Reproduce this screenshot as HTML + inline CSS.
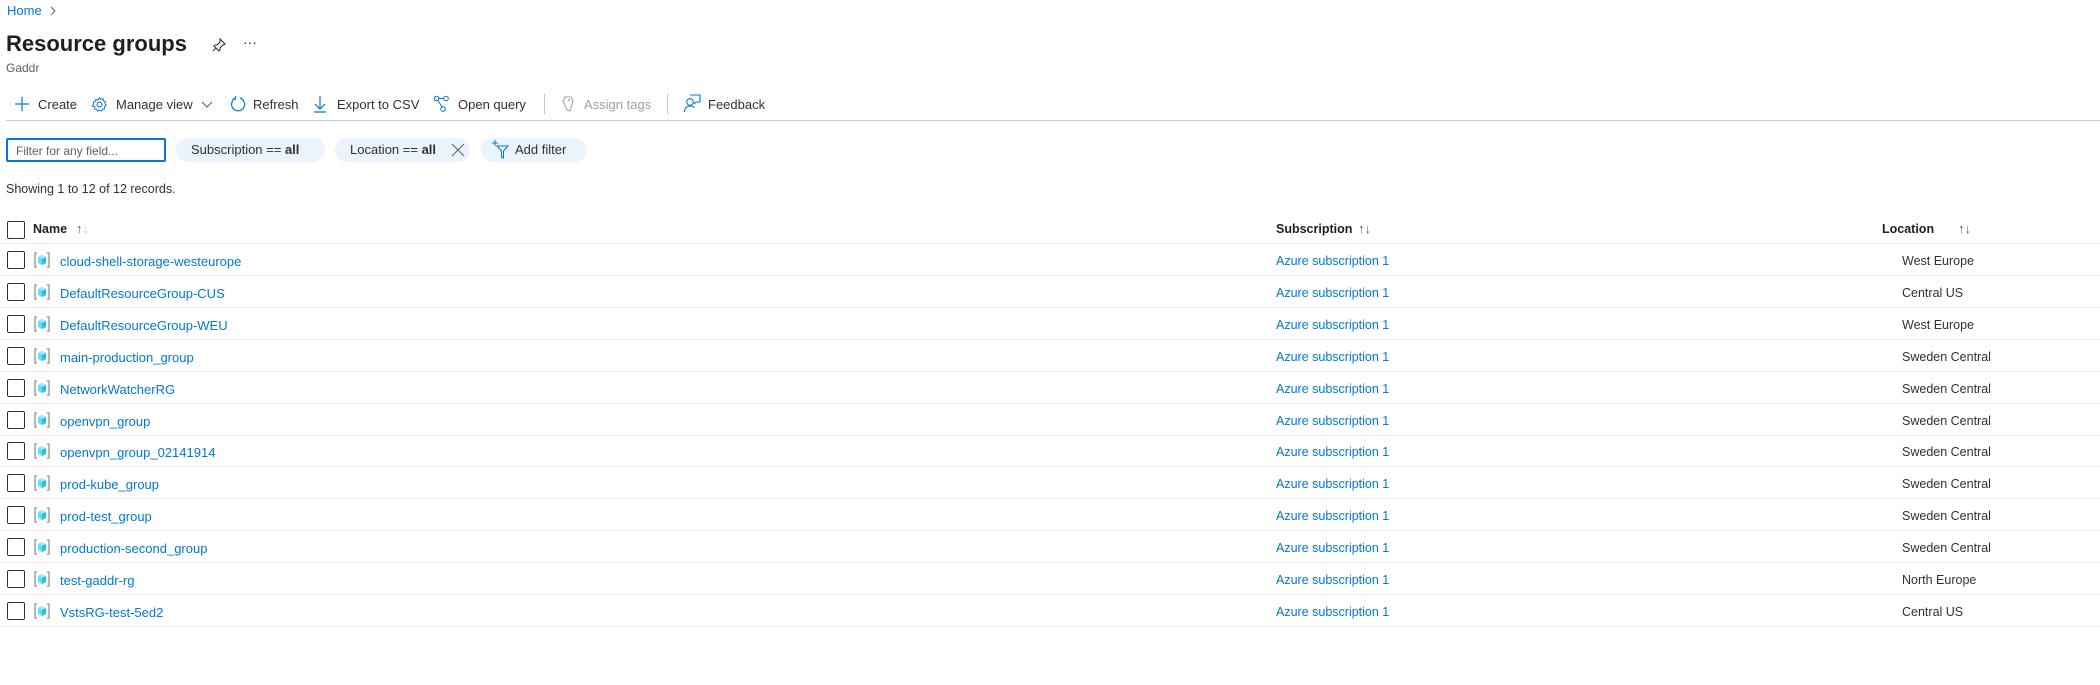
<!DOCTYPE html>
<html><head><meta charset="utf-8"><style>
*{box-sizing:border-box;margin:0;padding:0}
body{width:2100px;height:685px;background:#fff;font-family:"Liberation Sans",sans-serif;color:#323130;position:relative;overflow:hidden;font-size:13px}
.a{position:absolute;white-space:nowrap}
.blue{color:#0078d4}
.tb{position:absolute;top:96px;height:17px;line-height:17px;font-size:13px}
.pill{position:absolute;top:138px;height:24px;line-height:24px;background:#ebf3fc;border-radius:12px;font-size:13px}
.cb{position:absolute;left:7px;width:18px;height:18px;border:1px solid #323130;border-radius:2px}
.row{position:absolute;left:0;width:2100px;height:32px;border-bottom:1px solid #edebe9}
.row .nm{position:absolute;left:60px;top:10px;color:#0078d4;font-size:13px}
.row .sb{position:absolute;left:1276px;top:10px;color:#0078d4;font-size:12.5px}
.row .lc{position:absolute;left:1902px;top:10px;font-size:12.5px}
.row .cb{top:7px}
.row svg{position:absolute;left:33px;top:7px}
</style></head><body>
<div class="a blue" style="left:7px;top:3px;font-size:13px">Home</div>
<svg class="a" style="left:49px;top:6px" width="8" height="10"><path d="M2 1l4 4-4 4" fill="none" stroke="#605e5c" stroke-width="1"/></svg>
<div class="a" style="left:6px;top:31px;font-size:22px;font-weight:600;color:#201f1e">Resource groups</div>
<svg class="a" style="left:211px;top:37px" width="16" height="16" viewBox="0 0 16 16"><path d="M9 2l5 5-2 1-3 3 0 2-1 1-5-5 1-1 2 0 3-3z M5 11l-3 3" fill="none" stroke="#323130" stroke-width="1.1"/></svg>
<div class="a" style="left:243px;top:34px;font-size:14px">···</div>
<div class="a" style="left:6px;top:61px;font-size:12px;color:#605e5c">Gaddr</div>

<svg class="a" style="left:14px;top:96px" width="16" height="16"><path d="M8 1v14M1 8h14" stroke="#0078d4" stroke-width="1.2"/></svg>
<div class="tb" style="left:38px">Create</div>
<svg class="a" style="left:91px;top:96px" width="17" height="17" viewBox="0 0 16 16"><circle cx="8" cy="8" r="2.3" fill="none" stroke="#0078d4"/><path d="M8 1.5l1.3 1.6 2-.6.4 2 2 .8-.7 1.9 1.3 1.6-1.6 1.2.2 2.1-2 .1-.8 1.9-1.9-.8-1.8 1-1-1.8-2-.3.3-2L1.2 9.3 2.6 7.8 2 5.8l2-.6.6-2 2 .6z" fill="none" stroke="#0078d4" stroke-width=".9"/></svg>
<div class="tb" style="left:116px">Manage view</div>
<svg class="a" style="left:201px;top:100px" width="12" height="9"><path d="M1 2l5 5 5-5" fill="none" stroke="#605e5c"/></svg>
<svg class="a" style="left:229px;top:95px" width="18" height="18"><path d="M6 3.5A6.5 6.5 0 1 0 11 3" fill="none" stroke="#0078d4" stroke-width="1.2"/><path d="M6.5 1v3H3.5" fill="none" stroke="#0078d4" stroke-width="1.2"/></svg>
<div class="tb" style="left:253px">Refresh</div>
<svg class="a" style="left:313px;top:95px" width="14" height="18"><path d="M7 1v13M2 9l5 5 5-5M1 17h12" fill="none" stroke="#0078d4" stroke-width="1.2"/></svg>
<div class="tb" style="left:337px">Export to CSV</div>
<svg class="a" style="left:433px;top:95px" width="17" height="18"><circle cx="3.5" cy="3.5" r="2.3" fill="none" stroke="#0078d4"/><circle cx="13" cy="3.5" r="2.3" fill="none" stroke="#0078d4"/><circle cx="10" cy="14" r="2.3" fill="none" stroke="#0078d4"/><path d="M5.8 3.5h5M5 5.5l4 6.5" stroke="#0078d4"/></svg>
<div class="tb" style="left:458px">Open query</div>
<div class="a" style="left:544px;top:94px;width:1px;height:20px;background:#c8c6c4"></div>
<svg class="a" style="left:561px;top:95px" width="14" height="18"><path d="M4 2h6l2 4-3 10-3-1-4-9z" fill="none" stroke="#a19f9d"/><circle cx="8" cy="5" r="1" fill="#a19f9d"/></svg>
<div class="tb" style="left:584px;color:#a19f9d">Assign tags</div>
<div class="a" style="left:667px;top:94px;width:1px;height:20px;background:#c8c6c4"></div>
<svg class="a" style="left:683px;top:94px" width="18" height="19"><circle cx="7" cy="8" r="3.3" fill="none" stroke="#0078d4" stroke-width="1.1"/><path d="M1.5 18c0-4 2.5-6 5.5-6s4 1 4.5 2M7 1h10v7h-4l-2 2" fill="none" stroke="#0078d4" stroke-width="1.1"/></svg>
<div class="tb" style="left:708px">Feedback</div>
<div class="a" style="left:6px;top:120px;width:2094px;height:1px;background:#c8c6c4"></div>

<div class="a" style="left:6px;top:138px;width:160px;height:24px;border:2px solid #0078d4;border-radius:2px;font-size:12px;color:#605e5c;padding:4px 0 0 8px">Filter for any field...</div>
<div class="pill" style="left:176px;width:149px;padding-left:15px">Subscription == <b>all</b></div>
<div class="pill" style="left:335px;width:135px;padding-left:15px">Location == <b>all</b></div>
<svg class="a" style="left:451px;top:143px" width="14" height="14"><path d="M1 1l12 12M13 1L1 13" stroke="#605e5c"/></svg>
<div class="pill" style="left:481px;width:106px;padding-left:34px">Add filter</div>
<svg class="a" style="left:491px;top:140px" width="18" height="20"><path d="M4 0v6M1 3h6" stroke="#0078d4"/><path d="M6 6h11l-4.5 5v7l-2-1v-6z" fill="none" stroke="#0078d4"/></svg>

<div class="a" style="left:6px;top:182px;font-size:12.5px">Showing 1 to 12 of 12 records.</div>

<div class="cb" style="top:221px"></div>
<div class="a" style="left:33px;top:222px;font-weight:600;font-size:12.5px;color:#201f1e">Name</div>
<div class="a" style="left:76px;top:221px;font-size:13px;color:#605e5c">↑<span style="color:#c8c6c4">↓</span></div>
<div class="a" style="left:1276px;top:222px;font-weight:600;font-size:12.5px;color:#201f1e">Subscription</div>
<div class="a" style="left:1358px;top:221px;font-size:13px;color:#605e5c">↑↓</div>
<div class="a" style="left:1882px;top:222px;font-weight:600;font-size:12.5px;color:#201f1e">Location</div>
<div class="a" style="left:1958px;top:221px;font-size:13px;color:#605e5c">↑↓</div>
<div class="a" style="left:0;top:243px;width:2100px;height:1px;background:#edebe9"></div>

<svg width="0" height="0" style="position:absolute"><defs><g id="rg"><path d="M4 2H2v14h2M14 2h2v14h-2" fill="none" stroke="#a19f9d" stroke-width="1.5"/><path d="M9 4l4 2v6l-4 2-4-2V6z" fill="#50e6ff"/><path d="M9 4l4 2-4 2-4-2z" fill="#9cebff"/><path d="M9 8v6l4-2V6z" fill="#32bedd"/></g></defs></svg>

<div id="rows"></div>
<script>
var d=[["cloud-shell-storage-westeurope","West Europe"],["DefaultResourceGroup-CUS","Central US"],["DefaultResourceGroup-WEU","West Europe"],["main-production_group","Sweden Central"],["NetworkWatcherRG","Sweden Central"],["openvpn_group","Sweden Central"],["openvpn_group_02141914","Sweden Central"],["prod-kube_group","Sweden Central"],["prod-test_group","Sweden Central"],["production-second_group","Sweden Central"],["test-gaddr-rg","North Europe"],["VstsRG-test-5ed2","Central US"]];
var h="";d.forEach(function(r,i){h+='<div class="row" style="top:'+(244+i*31.9)+'px"><div class="cb"></div><svg width="18" height="18" viewBox="0 0 18 18"><use href="#rg"/></svg><div class="nm">'+r[0]+'</div><div class="sb">Azure subscription 1</div><div class="lc">'+r[1]+'</div></div>';});
document.getElementById("rows").innerHTML=h;
</script>
</body></html>
